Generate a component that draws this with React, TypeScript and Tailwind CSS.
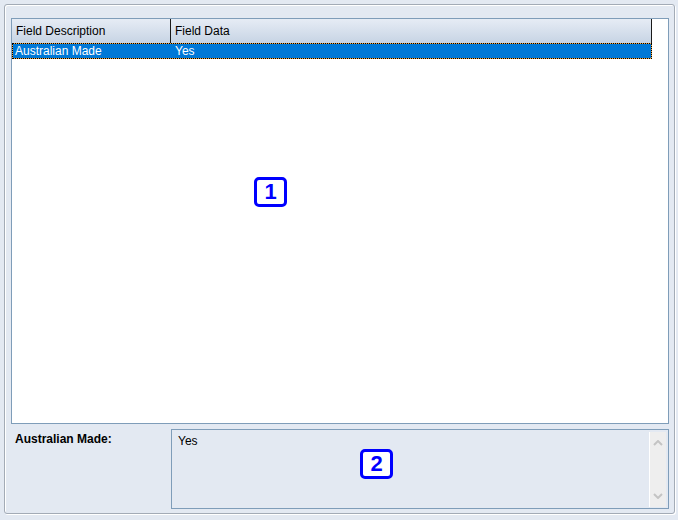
import React from 'react'

const font = { fontFamily: '"Liberation Sans", Arial, sans-serif' }

function Badge({ n, className }: { n: string; className: string }) {
  return (
    <div
      className={`absolute flex h-[30px] w-[33px] items-center justify-center rounded-[5px] border-[3px] border-[#0000ff] bg-white text-[22px] font-bold leading-none text-[#0000ff] ${className}`}
    >
      {n}
    </div>
  )
}

export default function App() {
  return (
    <div className="relative h-[520px] w-[678px] bg-[#e3e9f2] pl-[4px] pt-[4px] text-[12px] text-black" style={font}>
      <div className="flex h-[510px] w-[671px] flex-col rounded-[3px] border border-[#a3abb6] pb-[4px] pl-[6px] pr-[5px] pt-[13px] shadow-[inset_1px_1px_0_#fff,1px_1px_0_#fff]">
        {/* table */}
        <div className="h-[406px] border border-[#7f9db9] bg-white">
          <div className="flex h-[24px] w-[640px] items-center border-r border-[#1a1a1a] bg-gradient-to-b from-[#e6ecf5] to-[#c7d4e4] leading-[14px]">
            <div className="flex h-full w-[159px] items-center border-r border-[#1a1a1a] pl-[4px]">Field Description</div>
            <div className="pl-[4px]">Field Data</div>
          </div>
          <div className="h-[16px] w-[640px] border border-dotted border-black bg-[#f5a53c]">
            <div className="flex h-full items-center bg-[#0078d7] leading-[14px] text-white">
              <div className="w-[158px] pl-[2px]">Australian Made</div>
              <div className="pl-[4px]">Yes</div>
            </div>
          </div>
        </div>
        {/* detail */}
        <div className="mt-[5px] flex h-[80px]">
          <div className="w-[160px] pl-[4px] pt-[3px] font-bold leading-[14px]">Australian Made:</div>
          <div className="relative flex-1 border border-[#7f9db9] bg-[#e3e9f2] pl-[6px] pt-[4px] leading-[14px]">
            Yes
            <div className="absolute bottom-[1px] right-[2px] top-[2px] flex w-[17px] flex-col items-center justify-between border-l border-white bg-[#eeeeee] py-[6px]">
              <svg width="10" height="6" viewBox="0 0 10 6" className="mt-[2px]">
                <path d="M1 5 L5 1 L9 5" fill="none" stroke="#c4c4c4" strokeWidth="2" />
              </svg>
              <svg width="10" height="6" viewBox="0 0 10 6" className="mb-[2px]">
                <path d="M1 1 L5 5 L9 1" fill="none" stroke="#c4c4c4" strokeWidth="2" />
              </svg>
            </div>
          </div>
        </div>
      </div>
      <Badge n="1" className="left-[254px] top-[177px]" />
      <Badge n="2" className="left-[360px] top-[449px]" />
    </div>
  )
}
